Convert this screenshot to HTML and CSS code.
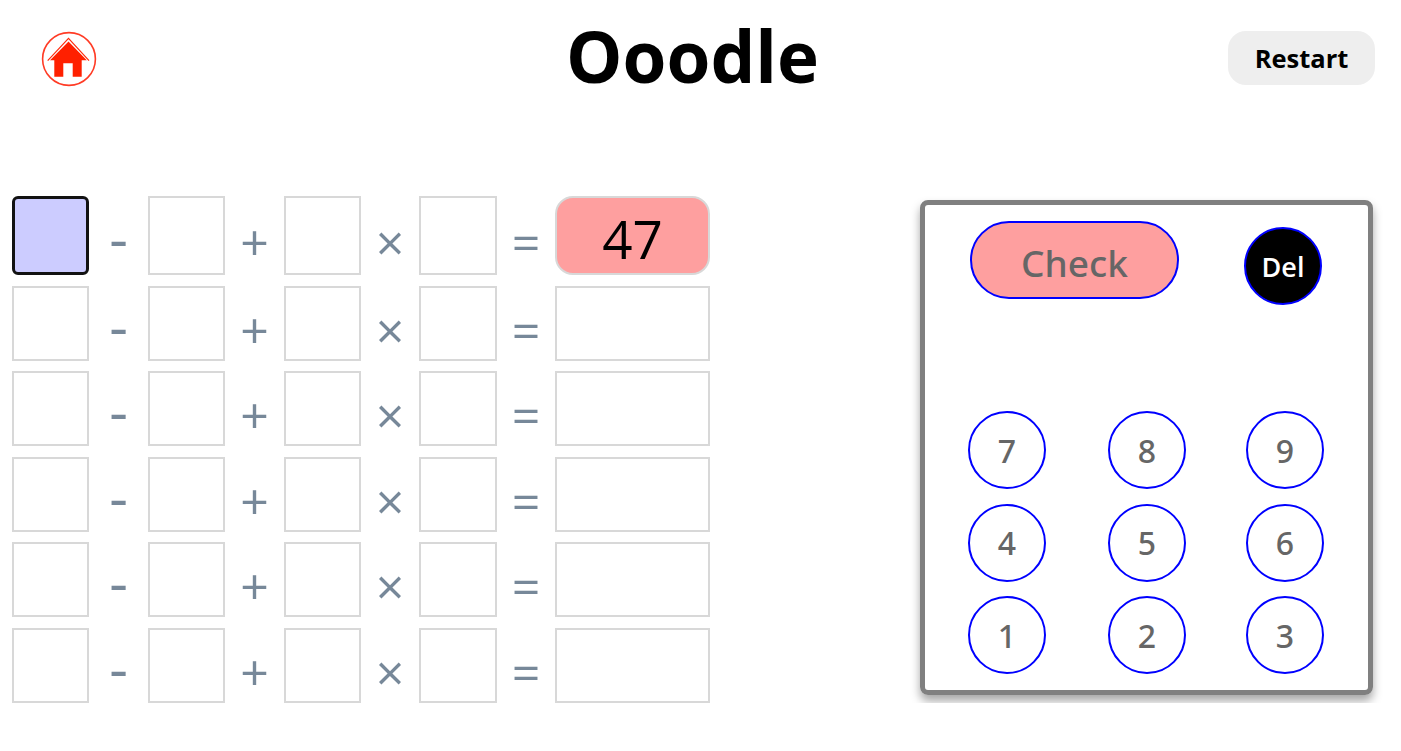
FILE: index.html
```html
<!DOCTYPE html>
<html lang="en">
<head>
  <meta charset="UTF-8">
  <title>Ooodle</title>
  <link rel="stylesheet" href="styles.css">
</head>
<body>
  <header class="header">
    <a class="home" href="#">
      <svg width="56" height="56" viewBox="0 0 56 56">
        <circle cx="28" cy="28" r="26.4" fill="none" stroke="#ff3b25" stroke-width="1.6"/>
        <path d="M6.700 29.600 L27.500 7.300 L48 29.600" fill="none" stroke="#ff2a0c" stroke-width="1.200"/>
        <path d="M27.500 10.400 L45.800 29.200 L40.700 29.200 L40.700 45.700 L31.700 45.700 L31.700 32.300 L22.300 32.300 L22.300 45.700 L13.300 45.700 L13.300 29.200 L9 29.200 Z" fill="#ff2000"/>
      </svg>
    </a>
    <h1 class="title">Ooodle</h1>
    <button class="restart">Restart</button>
  </header>

  <main class="game">
    <div class="board">
      <div class="row row-first">
        <div class="cell cell-active"></div><div class="op op-minus">-</div>
        <div class="cell"></div><div class="op">+</div>
        <div class="cell"></div><div class="op">×</div>
        <div class="cell"></div><div class="op">=</div>
        <div class="cell result result-target">47</div>
      </div>
      <div class="row">
        <div class="cell"></div><div class="op op-minus">-</div>
        <div class="cell"></div><div class="op">+</div>
        <div class="cell"></div><div class="op">×</div>
        <div class="cell"></div><div class="op">=</div>
        <div class="cell result"></div>
      </div>
      <div class="row">
        <div class="cell"></div><div class="op op-minus">-</div>
        <div class="cell"></div><div class="op">+</div>
        <div class="cell"></div><div class="op">×</div>
        <div class="cell"></div><div class="op">=</div>
        <div class="cell result"></div>
      </div>
      <div class="row">
        <div class="cell"></div><div class="op op-minus">-</div>
        <div class="cell"></div><div class="op">+</div>
        <div class="cell"></div><div class="op">×</div>
        <div class="cell"></div><div class="op">=</div>
        <div class="cell result"></div>
      </div>
      <div class="row">
        <div class="cell"></div><div class="op op-minus">-</div>
        <div class="cell"></div><div class="op">+</div>
        <div class="cell"></div><div class="op">×</div>
        <div class="cell"></div><div class="op">=</div>
        <div class="cell result"></div>
      </div>
      <div class="row">
        <div class="cell"></div><div class="op op-minus">-</div>
        <div class="cell"></div><div class="op">+</div>
        <div class="cell"></div><div class="op">×</div>
        <div class="cell"></div><div class="op">=</div>
        <div class="cell result"></div>
      </div>
    </div>

    <div class="keypad">
      <div class="actions">
        <button class="check">Check</button>
        <button class="del">Del</button>
      </div>
      <div class="keys">
        <button class="key">7</button>
        <button class="key">8</button>
        <button class="key">9</button>
        <button class="key">4</button>
        <button class="key">5</button>
        <button class="key">6</button>
        <button class="key">1</button>
        <button class="key">2</button>
        <button class="key">3</button>
      </div>
    </div>
  </main>
</body>
</html>
```

FILE: styles.css
```css
body {
  font-family: "Open Sans", "Noto Sans", sans-serif;
  background-color: #fff;
  color: #000;
  margin: 0;
}
button {
  font-family: inherit;
  padding: 0;
  cursor: pointer;
}
.header {
  display: flex;
  justify-content: space-between;
  align-items: center;
  height: 113px;
  padding: 5px 26px 0 41px;
  box-sizing: border-box;
  position: relative;
}
.home {
  display: block;
  width: 56px;
  height: 56px;
}
.title {
  position: absolute;
  left: 0;
  right: 16px;
  top: 0;
  margin: 0;
  text-align: center;
  font-size: 71px;
  font-weight: 700;
  line-height: 111px;
}
.restart {
  width: 147px;
  height: 54px;
  margin-top: -2px;
  border: 0;
  border-radius: 18px;
  background-color: #eee;
  color: #000;
  font-size: 25.5px;
  font-weight: 700;
}
.game {
  display: flex;
  align-items: flex-start;
  padding: 83px 0 0 12px;
}
.board {
  width: 698px;
  display: flex;
  flex-direction: column;
  gap: 10.5px;
}
.row {
  display: grid;
  grid-template-columns: 77px 59px 77px 59px 77px 58px 78px 58px 155px;
  height: 75px;
}
.row-first {
  height: 79px;
}
.cell {
  border: 2px solid #d8d8d8;
  box-sizing: border-box;
}
.cell-active {
  background-color: #ccf;
  border: 3px solid #121212;
  border-radius: 6px;
}
.result {
  display: flex;
  justify-content: center;
  align-items: center;
  padding-top: 6px;
  font-size: 53px;
  line-height: 1;
}
.result-target {
  background-color: #fe9f9f;
  border-radius: 18px;
}
.op {
  display: flex;
  justify-content: center;
  align-items: center;
  padding-top: 13px;
  color: #778899;
  font-size: 50px;
  line-height: 1;
}
.op-minus {
  padding-top: 5px;
  font-size: 58px;
}
.keypad {
  width: 453px;
  height: 495px;
  box-sizing: border-box;
  margin: 4px 0 0 210px;
  padding: 16px 0 0;
  border: 5px solid #808080;
  border-radius: 8px;
  box-shadow: 0 6px 10px rgba(0, 0, 0, 0.35);
}
.actions {
  display: flex;
  align-items: flex-start;
  padding-left: 45px;
}
.check {
  width: 209px;
  height: 78px;
  padding-top: 4px;
  border: 2px solid #00f;
  border-radius: 39px;
  background-color: #fe9f9f;
  color: #666;
  font-family: "Noto Sans", sans-serif;
  font-size: 37px;
  font-weight: 500;
}
.del {
  width: 78px;
  height: 78px;
  margin: 6px 0 0 65px;
  border: 2px solid #00f;
  border-radius: 50%;
  background-color: #000;
  color: #fff;
  font-size: 27px;
  font-weight: 600;
}
.keys {
  display: grid;
  grid-template-columns: 140px 138px 78px;
  row-gap: 14.5px;
  margin: 106px 0 0 43px;
}
.key {
  width: 78px;
  height: 78px;
  border: 2px solid #00f;
  border-radius: 50%;
  background-color: #fff;
  color: #666;
  font-family: "Noto Sans", sans-serif;
  font-size: 32px;
  font-weight: 500;
}
```
